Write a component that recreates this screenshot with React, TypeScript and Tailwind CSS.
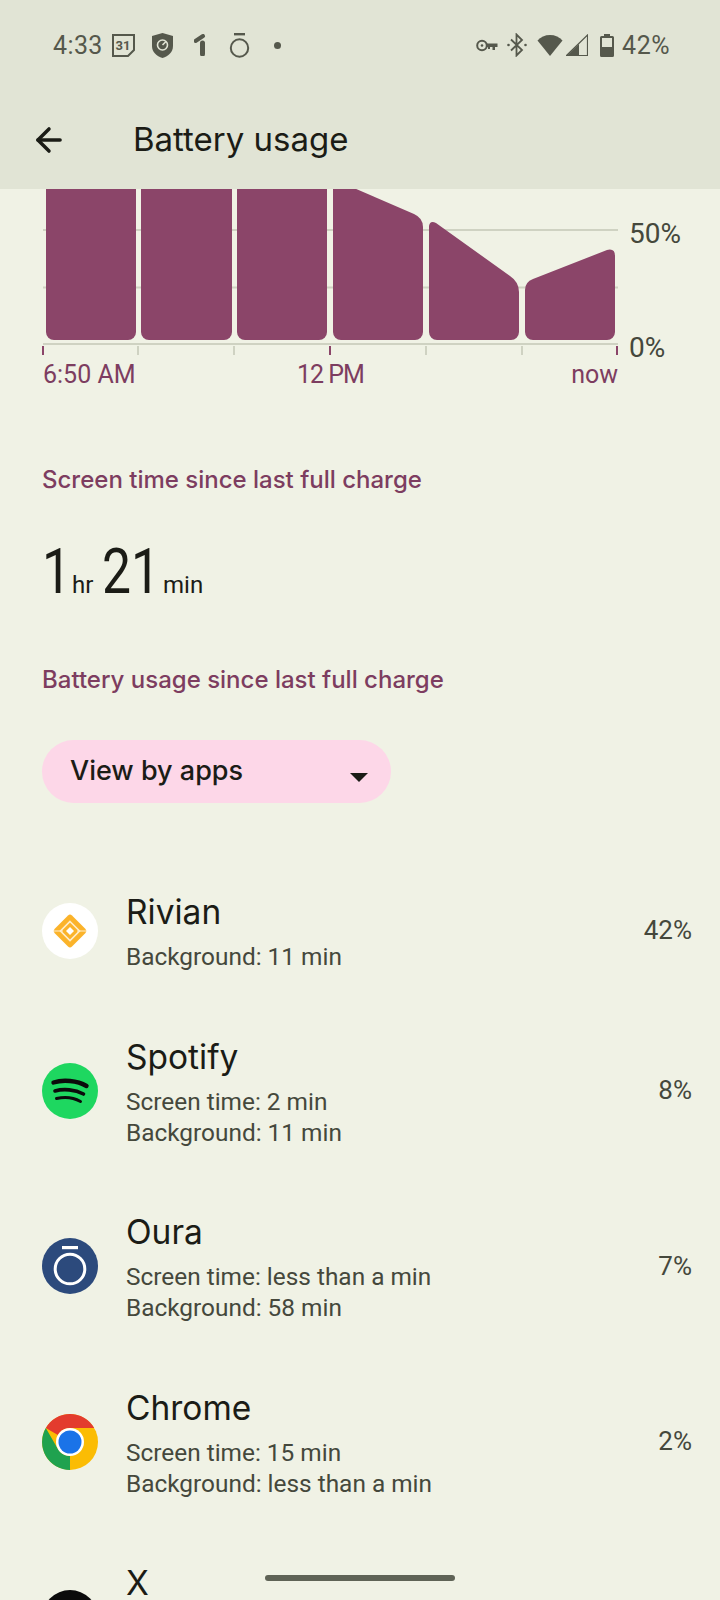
import { ArrowLeft } from 'lucide-react'

const apps = [
  { name: 'Rivian', lines: ['Background: 11 min'], percent: '42%', icon: 'rivian' },
  { name: 'Spotify', lines: ['Screen time: 2 min', 'Background: 11 min'], percent: '8%', icon: 'spotify' },
  { name: 'Oura', lines: ['Screen time: less than a min', 'Background: 58 min'], percent: '7%', icon: 'oura' },
  { name: 'Chrome', lines: ['Screen time: 15 min', 'Background: less than a min'], percent: '2%', icon: 'chrome' },
]

function AppIcon({ kind }: { kind: string }) {
  if (kind === 'rivian') {
    return (
      <svg width="56" height="56" viewBox="0 0 56 56">
        <circle cx="28" cy="28" r="28" fill="#fff" />
        <path d="M26 12.5a3 3 0 0 1 4 0L43.5 26a3 3 0 0 1 0 4L30 43.5a3 3 0 0 1-4 0L12.5 30a3 3 0 0 1 0-4Z" fill="#fbb32a" />
        <path d="M28 18.5 37.5 28 28 37.5 18.5 28Z" fill="none" stroke="#ffeecb" strokeWidth="1.6" />
        <path d="M12 28h9M35 28h9" stroke="#ffeecb" strokeWidth="1.2" />
        <path d="M28 24 32 28 28 32 24 28Z" fill="#fff" />
      </svg>
    )
  }
  if (kind === 'spotify') {
    return (
      <svg width="56" height="56" viewBox="0 0 56 56">
        <circle cx="28" cy="28" r="28" fill="#1ed760" />
        <path d="M11.5 19.5C21 16.5 35 17.5 44.5 23" fill="none" stroke="#0b0b0b" strokeWidth="4.4" strokeLinecap="round" />
        <path d="M13 28C21.5 25.5 33 26.5 41.5 31" fill="none" stroke="#0b0b0b" strokeWidth="3.6" strokeLinecap="round" />
        <path d="M14.5 35.5C22 33.8 31.5 34.5 38.5 38.5" fill="none" stroke="#0b0b0b" strokeWidth="3" strokeLinecap="round" />
      </svg>
    )
  }
  if (kind === 'oura') {
    return (
      <svg width="56" height="56" viewBox="0 0 56 56">
        <circle cx="28" cy="28" r="28" fill="#2c4a7c" />
        <rect x="20" y="8" width="16" height="3.2" fill="#fff" />
        <circle cx="28" cy="31" r="14.8" fill="none" stroke="#fff" strokeWidth="3" />
      </svg>
    )
  }
  return (
    <svg width="56" height="56" viewBox="0 0 56 56">
      <circle cx="28" cy="28" r="28" fill="#fbbc04" />
      <path d="M28 0A28 28 0 0 1 52.2 14H28A14 14 0 0 0 15.9 21L3.8 14A28 28 0 0 1 28 0Z" fill="#e33b2e" />
      <path d="M3.8 14 15.9 35A14 14 0 0 0 28 42L28 56A28 28 0 0 1 3.8 14Z" fill="#1fa24f" />
      <circle cx="28" cy="28" r="14" fill="#fff" />
      <circle cx="28" cy="28" r="11.5" fill="#1a73e8" />
    </svg>
  )
}

function StatusLeft() {
  return (
    <div className="flex items-center">
      <span className="w-[47px] text-[25px] leading-none tracking-[0.4px] text-[#55584c]">4:33</span>
      <svg className="ml-[11px]" width="25" height="25" viewBox="0 0 25 25">
        <path d="M2 2h21v15l-6 6H2Z" fill="none" stroke="#55584c" strokeWidth="2" />
        <text x="12" y="16.5" textAnchor="middle" fontSize="13" fontWeight="700" fill="#55584c">31</text>
      </svg>
      <svg className="ml-[15px]" width="23" height="25" viewBox="0 0 23 25">
        <path d="M11.5 0 22 3v10c0 6-4.5 10-10.5 12C5.5 23 1 19 1 13V3Z" fill="#55584c" />
        <circle cx="11.5" cy="12" r="5" fill="none" stroke="#e1e4d5" strokeWidth="1.6" />
        <path d="M11.5 12 15 8.5" stroke="#e1e4d5" strokeWidth="1.6" />
      </svg>
      <svg className="ml-[20px]" width="12" height="22" viewBox="0 0 12 22">
        <path d="M1.5 7 9 2" stroke="#55584c" strokeWidth="4" strokeLinecap="round" />
        <path d="M8.5 9v11" stroke="#55584c" strokeWidth="5" strokeLinecap="round" />
      </svg>
      <svg className="ml-[23px]" width="21" height="25" viewBox="0 0 21 25">
        <rect x="5" y="0" width="11" height="2.4" fill="#55584c" />
        <circle cx="10.5" cy="15" r="8.7" fill="none" stroke="#55584c" strokeWidth="2" />
      </svg>
      <span className="ml-[24px] h-[7px] w-[7px] rounded-full bg-[#55584c]" />
    </div>
  )
}

function StatusRight() {
  return (
    <div className="flex items-center">
      <svg width="22" height="13" viewBox="0 0 22 13">
        <circle cx="6" cy="6.5" r="4.8" fill="none" stroke="#55584c" strokeWidth="2" />
        <circle cx="6" cy="6.5" r="1.3" fill="#55584c" />
        <path d="M10 4.5h11.5v3.5H19v3h-2.5V8H14v2h-2V8h-2Z" fill="#55584c" />
      </svg>
      <svg className="ml-[9px]" width="20" height="24" viewBox="0 0 20 24">
        <path d="M4 6.5 15 17l-5.5 5.5V1.5L15 7 4 17.5" fill="none" stroke="#55584c" strokeWidth="1.8" />
        <circle cx="1.5" cy="12" r="1.3" fill="#55584c" />
        <circle cx="18.5" cy="12" r="1.3" fill="#55584c" />
      </svg>
      <svg className="ml-[10px]" width="26" height="22" viewBox="0 0 26 22">
        <path d="M13 22 0.5 6.5C3.5 3 8 1 13 1s9.5 2 12.5 5.5Z" fill="#55584c" />
      </svg>
      <svg className="ml-[3px]" width="22" height="22" viewBox="0 0 22 22">
        <path d="M0.5 21.5 21.5 1v20.5Z" fill="none" stroke="#55584c" strokeWidth="1.2" />
        <path d="M0.5 22 13 10v12Z" fill="#55584c" />
      </svg>
      <svg className="ml-[12px]" width="14" height="23" viewBox="0 0 14 23">
        <path d="M4 0h6v2h2.5A1.5 1.5 0 0 1 14 3.5V21.5A1.5 1.5 0 0 1 12.5 23h-11A1.5 1.5 0 0 1 0 21.5V3.5A1.5 1.5 0 0 1 1.5 2H4Z" fill="#55584c" />
        <rect x="2" y="4" width="10" height="9" fill="#e1e4d5" />
      </svg>
      <span className="ml-[8px] text-[25px] leading-none tracking-[0.5px] text-[#55584c]">42%</span>
    </div>
  )
}

function Chart() {
  const ticks = [43, 138, 234, 330, 426, 522, 617]
  return (
    <svg className="block" width="720" height="172" viewBox="0 189 720 172">
      <path d="M43 230H618M43 287.5H618M43 344H618" stroke="#cfd2c2" strokeWidth="2" fill="none" />
      {ticks.map((x, i) => (
        <path
          key={x}
          d={`M${x} 346V355`}
          stroke={i === 0 || i === 3 || i === 6 ? '#8b4569' : '#cfd2c2'}
          strokeWidth="2"
        />
      ))}
      <g fill="#8b4569">
        <path d="M46 185H136V332a8 8 0 0 1-8 8H54a8 8 0 0 1-8-8Z" />
        <path d="M141 185H232V332a8 8 0 0 1-8 8H149a8 8 0 0 1-8-8Z" />
        <path d="M237 185H327V332a8 8 0 0 1-8 8H245a8 8 0 0 1-8-8Z" />
        <path d="M333 185H347L414 214Q423 218 423 227V332a8 8 0 0 1-8 8H341a8 8 0 0 1-8-8Z" />
        <path d="M429 226Q430 220 436 223L510 276Q519 282 519 292V332a8 8 0 0 1-8 8H437a8 8 0 0 1-8-8Z" />
        <path d="M525 290Q525 282 533 279L607 250Q615 248 615 256V332a8 8 0 0 1-8 8H533a8 8 0 0 1-8-8Z" />
      </g>
    </svg>
  )
}

export default function App() {
  return (
    <div className="relative flex h-[1600px] w-[720px] flex-col overflow-hidden bg-[#f0f2e5] font-['Roboto',sans-serif]">
      {/* Status bar + app bar */}
      <header className="h-[189px] shrink-0 bg-[#e1e4d5]">
        <div className="flex h-[90px] items-center justify-between pl-[53px] pr-[50px]">
          <StatusLeft />
          <StatusRight />
        </div>
        <div className="flex h-[99px] items-center pl-[30px]">
          <ArrowLeft size={38} strokeWidth={2.2} className="text-[#1b1c16]" />
          <h1 className="ml-[65px] font-['Inter',sans-serif] text-[33px] font-normal text-[#1b1c16]">Battery usage</h1>
        </div>
      </header>

      {/* Chart */}
      <div className="relative">
        <Chart />
        <span className="absolute left-[629px] top-[31px] text-[28px] leading-none text-[#45483c]">50%</span>
        <span className="absolute left-[629px] top-[145px] text-[28px] leading-none text-[#45483c]">0%</span>
      </div>
      <div className="grid h-[30px] grid-cols-[254px_1fr_auto] pl-[43px] pr-[102px] text-[25px] leading-[28px] text-[#7d3d60]">
        <span>6:50 AM</span>
        <span className="tracking-[-1px]">12 PM</span>
        <span>now</span>
      </div>

      {/* Summary */}
      <section className="px-[42px] pt-[76px]">
        <p className="font-['Inter',sans-serif] text-[24px] font-medium leading-[30px] text-[#7d3d60]">Screen time since last full charge</p>
        <p className="mt-[40px] flex h-[74px] items-baseline text-[#1b1c16]">
          <span className="inline-block w-[30px] origin-left scale-x-[0.82] text-[63px] leading-[74px]">1</span>
          <span className="w-[30px] text-[24px]">hr</span>
          <span className="inline-block w-[61px] origin-left scale-x-[0.82] text-[63px] leading-[74px]">21</span>
          <span className="text-[24px]">min</span>
        </p>
        <p className="mt-[56px] font-['Inter',sans-serif] text-[24px] font-medium leading-[30px] text-[#7d3d60]">Battery usage since last full charge</p>
        <button className="mt-[45px] flex h-[63px] w-[349px] items-center justify-between rounded-full bg-[#fdd7e8] pl-[28px] pr-[23px] font-['Inter',sans-serif] text-[27px] font-medium text-[#1b1c16]">
          <span>View by apps</span>
          <span className="mt-[12px] h-0 w-0 border-x-[9px] border-t-[9px] border-x-transparent border-t-[#1b1c16]" />
        </button>
      </section>

      {/* App list */}
      <ul className="mt-[89px] flex flex-col">
        {apps.map((app) => (
          <li key={app.name} className="mb-[67.5px] flex items-center pl-[42px] pr-[28px]">
            <AppIcon kind={app.icon} />
            <div className="-mb-[3px] ml-[28px] flex-1">
              <p className="font-['Inter',sans-serif] text-[33.5px] leading-[40px] text-[#1b1c16]">{app.name}</p>
              <div className="mt-[9px]">
                {app.lines.map((line) => (
                  <p key={line} className="text-[24.4px] leading-[31px] text-[#45483c]">{line}</p>
                ))}
              </div>
            </div>
            <span className="text-[26px] text-[#45483c]">{app.percent}</span>
          </li>
        ))}
        <li className="flex pl-[42px]">
          <span className="mt-[27px] h-[56px] w-[56px] rounded-full bg-[#0b0b0b]" />
          <p className="ml-[28px] mt-[2px] font-['Inter',sans-serif] text-[33.5px] leading-[36px] text-[#1b1c16]">X</p>
        </li>
      </ul>

      {/* Gesture handle */}
      <div className="absolute bottom-[19px] left-[265px] h-[6px] w-[190px] rounded-full bg-[#5f6356]" />
    </div>
  )
}
